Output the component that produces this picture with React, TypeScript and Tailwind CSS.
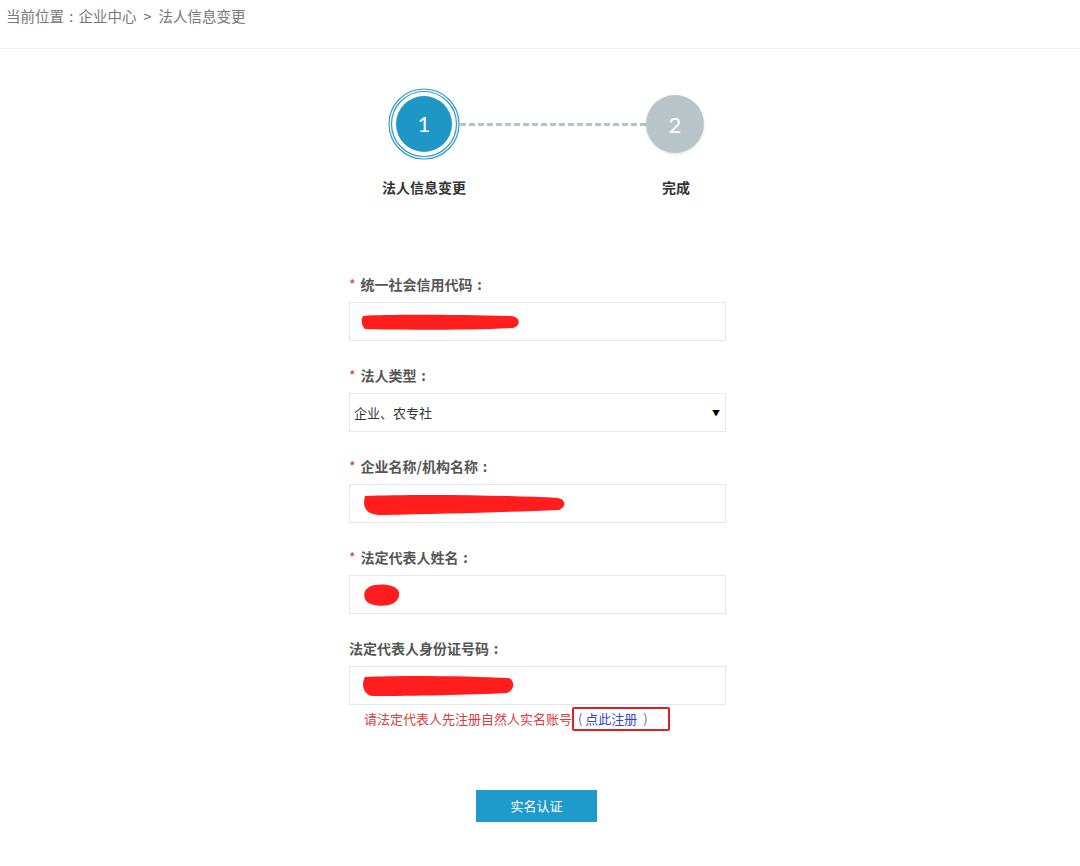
const font = { fontFamily: '"Noto Sans CJK SC", "Noto Sans", sans-serif' };

function Redact({ w, h, d }: { w: number; h: number; d: string }) {
  return (
    <svg width={w} height={h} viewBox={`0 0 ${w} ${h}`} className="block">
      <path d={d} fill="#ff1d1d" />
    </svg>
  );
}

function Colon() {
  return <span className="inline-block w-[1em] text-center">:</span>;
}

function Field({
  label,
  required = true,
  children,
}: {
  label: string;
  required?: boolean;
  children: React.ReactNode;
}) {
  return (
    <div className="flex flex-col">
      <div className="flex h-5 items-center text-[14px] font-bold text-[#555]">
        {required && <span className="mr-[5px] font-normal text-[#d33]">*</span>}
        {label}
        <Colon />
      </div>
      <div className="mt-2 flex h-[39px] w-[377px] items-center border border-[#e3e6ea] bg-white">
        {children}
      </div>
    </div>
  );
}

export default function App() {
  return (
    <div className="min-h-[866px] w-[1080px] bg-white text-[#333]" style={font}>
      <div className="h-[49px] border-b border-[#f0f0f0] px-[6px] pt-[5px] text-[14.5px] text-[#777]">
        当前位置<Colon />企业中心<span className="mx-[7px]">&gt;</span>法人信息变更
      </div>

      <div className="mt-[39px] flex items-center pl-[388px]">
        <svg width="72" height="72" viewBox="0 0 72 72" className="block">
          <circle cx="36" cy="36" r="35" fill="none" stroke="#2a9bc9" strokeWidth="1.2" />
          <circle cx="36" cy="36" r="32.5" fill="none" stroke="#2a9bc9" strokeWidth="1.2" />
          <circle cx="36" cy="36" r="28" fill="#1e96c6" />
          <text
            x="36"
            y="44"
            textAnchor="middle"
            fontSize="22"
            fill="#fff"
            fontFamily="Lato, 'Noto Sans', sans-serif"
          >
            1
          </text>
        </svg>
        <div className="h-[3px] w-[186px] bg-[repeating-linear-gradient(90deg,#b9c3c7_0px,#b9c3c7_6px,transparent_6px,transparent_9px)]" />
        <div
          className="flex h-[58px] w-[58px] items-center justify-center rounded-full bg-[#b9c4c8] text-[22px] text-white shadow-[0_1px_3px_rgba(0,0,0,0.12)]"
          style={{ fontFamily: "Lato, 'Noto Sans', sans-serif" }}
        >
          2
        </div>
      </div>

      <div className="mt-[17px] flex pl-[374px] text-[14px] font-bold text-[#333]">
        <div className="w-[100px] text-center">法人信息变更</div>
        <div className="ml-[152px] w-[100px] text-center">完成</div>
      </div>

      <div className="mt-[76px] ml-[349px] flex w-[377px] flex-col gap-6">
        <Field label="统一社会信用代码">
          <div className="ml-[11px]">
            <Redact
              w={160}
              h={18}
              d="M2 3 C30 1 100 2 150 3 C160 4 160 13 152 15 C110 17 40 17 4 16 C0 12 0 6 2 3 Z"
            />
          </div>
        </Field>
        <Field label="法人类型">
          <div className="flex w-full items-center justify-between pl-[4px] pr-[5px] text-[13px] text-[#333]">
            <span>企业、农专社</span>
            <span className="text-[8px] text-black">▼</span>
          </div>
        </Field>
        <Field label="企业名称/机构名称">
          <div className="ml-[12px]">
            <Redact
              w={204}
              h={24}
              d="M3 4 C50 2 140 3 196 6 C205 8 204 16 196 18 C150 20 80 22 20 23 C4 23 0 16 3 4 Z"
            />
          </div>
        </Field>
        <Field label="法定代表人姓名">
          <div className="ml-[13px]">
            <Redact
              w={38}
              h={24}
              d="M6 4 C14 0 30 1 35 7 C38 12 35 20 26 22 C16 24 4 22 2 16 C0 10 2 7 6 4 Z"
            />
          </div>
        </Field>
        <div className="flex flex-col">
          <Field label="法定代表人身份证号码" required={false}>
            <div className="ml-[11px]">
              <Redact
                w={154}
                h={24}
                d="M4 3 C40 1 110 2 148 4 C154 7 154 16 146 19 C110 21 50 22 12 22 C2 21 0 10 4 3 Z"
              />
            </div>
          </Field>
          <div className="mt-[2px] flex items-center pl-[15px] text-[13px] text-[#e0393e]">
            <span>请法定代表人先注册自然人实名账号</span>
            <span className="flex h-[24px] w-[98px] items-center rounded-[2px] border-2 border-[#e02020] pl-[4px] text-[#5566cc]">
              (&nbsp;<span className="text-[#3344cc]">点此注册</span>&nbsp;&nbsp;)
            </span>
          </div>
        </div>
      </div>

      <div className="ml-[476px] mt-[59px] flex h-[32px] w-[121px] items-center justify-center bg-[#1e9bcb] text-[13px] text-white">
        实名认证
      </div>
    </div>
  );
}
